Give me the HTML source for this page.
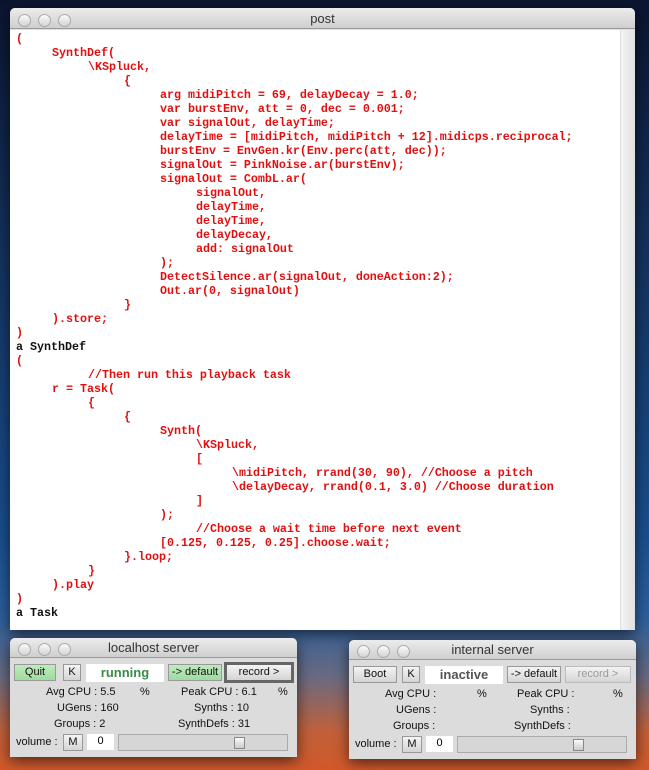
<!DOCTYPE html>
<html><head><meta charset="utf-8"><style>
*{margin:0;padding:0;box-sizing:border-box}
body{width:649px;height:770px;overflow:hidden;position:relative;font-family:"Liberation Sans",sans-serif;
background:linear-gradient(180deg,#0b1530 0%,#13305a 30%,#1a4f8e 70%,#2c5f9c 80%,#6a6a80 88%,#c0603a 95%,#d2582a 100%);}
.win{position:absolute;background:#e0e0e0;border-radius:5px 5px 0 0;box-shadow:0 4px 14px rgba(0,0,0,.6)}
.tb{height:21px;background:linear-gradient(#ececec,#cfcfcf);border-radius:5px 5px 0 0;border-bottom:1px solid #999;text-align:center;font-size:13px;color:#333;line-height:21px;position:relative}
.dots{position:absolute;left:8px;top:4px}
.dots i{display:inline-block;width:13px;height:13px;border-radius:50%;border:1px solid #aaa;background:linear-gradient(#fafafa,#d4d4d4);margin-right:7px}
.code{position:absolute;left:0;top:22px;width:610px;height:600px;background:#fff;font:bold 11.7px/14px "Liberation Mono",monospace;color:#e01010;padding:2px 0 0 6px;white-space:pre;letter-spacing:-0.02px}
.code div{height:14px}
.k{color:#111}
.sb{position:absolute;left:610px;top:22px;width:14px;height:600px;background:linear-gradient(90deg,#f4f4f4,#e2e2e2);border-left:1px solid #ddd}
.srv{width:287px;height:119px;background:#dcdcdc}
.srv .tb{height:20px;line-height:20px;font-size:13px}
.b{position:absolute;height:17px;font-size:11px;line-height:15px;text-align:center;border:1px solid #999;background:linear-gradient(#f4f4f4,#d4d4d4);color:#111}
.g{background:linear-gradient(#bfeabf,#9edc9e)}
.st{position:absolute;background:#fff;font-weight:bold;font-size:13px;text-align:center;line-height:18px;height:18px}
.l{position:absolute;font-size:11px;color:#111;white-space:pre}
.sl{position:absolute;height:17px;border:1px solid #aaa;background:#d6d6d6}
.th{position:absolute;top:2px;width:11px;height:12px;border:1px solid #888;background:linear-gradient(#fafafa,#ccc)}
</style></head><body>
<div class="win" style="left:10px;top:8px;width:625px;height:622px;">
<div class="tb"><span class="dots"><i></i><i></i><i></i></span>post</div>
<div class="code"><div>(</div><div style="padding-left:36px">SynthDef(</div><div style="padding-left:72px">\KSpluck,</div><div style="padding-left:108px">{</div><div style="padding-left:144px">arg midiPitch = 69, delayDecay = 1.0;</div><div style="padding-left:144px">var burstEnv, att = 0, dec = 0.001;</div><div style="padding-left:144px">var signalOut, delayTime;</div><div style="padding-left:144px">delayTime = [midiPitch, midiPitch + 12].midicps.reciprocal;</div><div style="padding-left:144px">burstEnv = EnvGen.kr(Env.perc(att, dec));</div><div style="padding-left:144px">signalOut = PinkNoise.ar(burstEnv);</div><div style="padding-left:144px">signalOut = CombL.ar(</div><div style="padding-left:180px">signalOut,</div><div style="padding-left:180px">delayTime,</div><div style="padding-left:180px">delayTime,</div><div style="padding-left:180px">delayDecay,</div><div style="padding-left:180px">add: signalOut</div><div style="padding-left:144px">);</div><div style="padding-left:144px">DetectSilence.ar(signalOut, doneAction:2);</div><div style="padding-left:144px">Out.ar(0, signalOut)</div><div style="padding-left:108px">}</div><div style="padding-left:36px">).store;</div><div>)</div><div class="k">a SynthDef</div><div>(</div><div style="padding-left:72px">//Then run this playback task</div><div style="padding-left:36px">r = Task(</div><div style="padding-left:72px">{</div><div style="padding-left:108px">{</div><div style="padding-left:144px">Synth(</div><div style="padding-left:180px">\KSpluck,</div><div style="padding-left:180px">[</div><div style="padding-left:216px">\midiPitch, rrand(30, 90), //Choose a pitch</div><div style="padding-left:216px">\delayDecay, rrand(0.1, 3.0) //Choose duration</div><div style="padding-left:180px">]</div><div style="padding-left:144px">);</div><div style="padding-left:180px">//Choose a wait time before next event</div><div style="padding-left:144px">[0.125, 0.125, 0.25].choose.wait;</div><div style="padding-left:108px">}.loop;</div><div style="padding-left:72px">}</div><div style="padding-left:36px">).play</div><div>)</div><div class="k">a Task</div></div>
<div class="sb"></div>
</div>

<div class="win srv" style="left:10px;top:638px;">
<div class="tb"><span class="dots"><i></i><i></i><i></i></span>localhost server</div>
<div class="b g" style="left:4px;top:26px;width:42px">Quit</div>
<div class="b" style="left:53px;top:26px;width:18px">K</div>
<div class="st" style="left:76px;top:26px;width:78px;color:#3a8a4a">running</div>
<div class="b g" style="left:158px;top:26px;width:54px">-&gt; default</div>
<div class="b" style="left:214px;top:24px;width:70px;height:21px;border:3px solid #666;line-height:15px">record &gt;</div>
<div class="l" style="left:36px;top:48px">Avg CPU : 5.5</div>
<div class="l" style="left:130px;top:48px">%</div>
<div class="l" style="left:171px;top:48px">Peak CPU : 6.1</div>
<div class="l" style="left:268px;top:48px">%</div>
<div class="l" style="left:47px;top:64px">UGens : 160</div>
<div class="l" style="left:184px;top:64px">Synths : 10</div>
<div class="l" style="left:44px;top:80px">Groups : 2</div>
<div class="l" style="left:168px;top:80px">SynthDefs : 31</div>
<div class="l" style="left:6px;top:98px">volume :</div>
<div class="b" style="left:53px;top:96px;width:20px">M</div>
<div class="st" style="left:77px;top:96px;width:27px;font-weight:normal;font-size:11px;line-height:14px;height:16px">0</div>
<div class="sl" style="left:108px;top:96px;width:170px"><div class="th" style="left:115px"></div></div>
</div>

<div class="win srv" style="left:349px;top:640px;">
<div class="tb"><span class="dots"><i></i><i></i><i></i></span>internal server</div>
<div class="b" style="left:4px;top:26px;width:44px">Boot</div>
<div class="b" style="left:53px;top:26px;width:18px">K</div>
<div class="st" style="left:76px;top:26px;width:78px;color:#555">inactive</div>
<div class="b" style="left:158px;top:26px;width:54px">-&gt; default</div>
<div class="b" style="left:216px;top:26px;width:66px;color:#999;border-color:#bbb">record &gt;</div>
<div class="l" style="left:36px;top:48px">Avg CPU :</div>
<div class="l" style="left:128px;top:48px">%</div>
<div class="l" style="left:168px;top:48px">Peak CPU :</div>
<div class="l" style="left:264px;top:48px">%</div>
<div class="l" style="left:47px;top:64px">UGens :</div>
<div class="l" style="left:181px;top:64px">Synths :</div>
<div class="l" style="left:44px;top:80px">Groups :</div>
<div class="l" style="left:165px;top:80px">SynthDefs :</div>
<div class="l" style="left:6px;top:98px">volume :</div>
<div class="b" style="left:53px;top:96px;width:20px">M</div>
<div class="st" style="left:77px;top:96px;width:27px;font-weight:normal;font-size:11px;line-height:14px;height:16px">0</div>
<div class="sl" style="left:108px;top:96px;width:170px"><div class="th" style="left:115px"></div></div>
</div>
</body></html>
